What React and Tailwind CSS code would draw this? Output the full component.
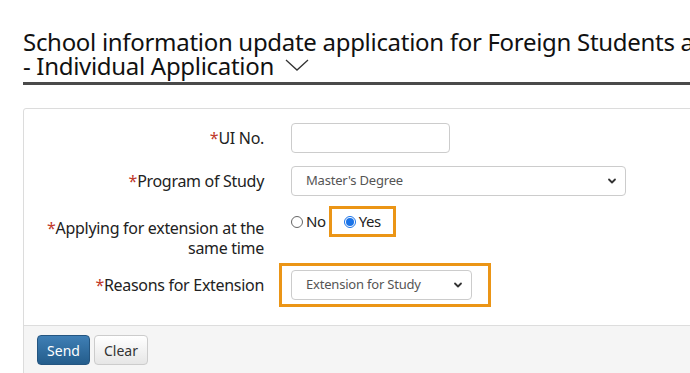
import { useState } from "react";

const Chevron = () => (
  <svg width="10" height="10" viewBox="0 0 10 10" className="shrink-0">
    <path d="M2 3.5 L5 6.5 L8 3.5" fill="none" stroke="#333" strokeWidth="1.8" strokeLinecap="round" strokeLinejoin="round" />
  </svg>
);

const Label = ({ children }) => (
  <div className="w-[240px] shrink-0 text-right text-[16px] leading-[27px] tracking-[-0.3px] text-[#222]">
    <span className="text-[#c0392b]">*</span>
    {children}
  </div>
);

const App = () => {
  const [extend, setExtend] = useState("yes");

  return (
    <div className="min-h-screen bg-white pl-[23px] pt-[30px] font-['Noto_Sans','Open_Sans',sans-serif] overflow-hidden">
      {/* Title */}
      <div className="border-b-[3px] border-[#4a4a4a] pb-[4px]">
        <h1 className="whitespace-nowrap text-[24px] leading-[24px] tracking-[-0.3px] text-[#111]">
          School information update application for Foreign Students and Overseas Chinese Students
          <br />
          - Individual Application
          <svg width="26" height="16" viewBox="0 0 26 16" className="ml-[10px] inline-block align-[2px]">
            <path d="M2 3 L13 13 L24 3" fill="none" stroke="#333" strokeWidth="1.3" />
          </svg>
        </h1>
      </div>

      {/* Form card */}
      <div className="mt-[23px] w-[700px] border border-[#dcdcdc] rounded-tl-[3px]">
        <div className="pt-[14px] pb-[18px] flex flex-col">
          {/* UI No */}
          <div className="flex items-center gap-[27px]">
            <Label>UI No.</Label>
            <input
              type="text"
              className="h-[30px] w-[159px] rounded-[4px] border border-[#ccc] px-2 outline-none"
            />
          </div>

          {/* Program of Study */}
          <div className="mt-[13px] flex items-center gap-[27px]">
            <Label>Program of Study</Label>
            <div className="flex h-[30px] w-[335px] items-center justify-between rounded-[4px] border border-[#ccc] pl-[14px] pr-[8px] text-[13px] tracking-[-0.2px] text-[#555]">
              <span>Master's Degree</span>
              <Chevron />
            </div>
          </div>

          {/* Extension radio */}
          <div className="mt-[10px] flex items-start gap-[27px]">
            <div className="w-[240px] shrink-0 pt-[12px] text-right text-[16px] leading-[20px] tracking-[-0.3px] text-[#222]">
              <span className="text-[#c0392b]">*</span>Applying for extension at the
              <br />
              same time
            </div>
            <div className="flex items-center text-[15px] tracking-[-0.4px] text-[#222]">
              <label className="flex items-center gap-[3px] cursor-pointer" onClick={() => setExtend("no")}>
                <span className={`h-[12px] w-[12px] rounded-full border ${extend === "no" ? "border-[#1a73e8] border-[4px]" : "border-[#666]"}`} />
                No
              </label>
              <div className="ml-[3px] flex h-[31px] w-[67px] items-center border-[3px] border-[#eb9516] pl-[12px]">
                <label className="flex items-center gap-[3px] cursor-pointer" onClick={() => setExtend("yes")}>
                  <span className={`flex h-[12px] w-[12px] items-center justify-center rounded-full border ${extend === "yes" ? "border-[#1a73e8]" : "border-[#666]"}`}>
                    {extend === "yes" && <span className="h-[8px] w-[8px] rounded-full bg-[#1a73e8]" />}
                  </span>
                  Yes
                </label>
              </div>
            </div>
          </div>

          {/* Reasons for Extension */}
          <div className="mt-[5px] flex items-center gap-[15px]">
            <Label>Reasons for Extension</Label>
            <div className="flex h-[44px] w-[212px] items-center border-[3px] border-[#eb9516] pl-[9px]">
              <div className="flex h-[30px] w-[181px] items-center justify-between rounded-[4px] border border-[#ccc] pl-[14px] pr-[8px] text-[13px] tracking-[-0.2px] text-[#555]">
                <span>Extension for Study</span>
                <Chevron />
              </div>
            </div>
          </div>
        </div>

        {/* Footer */}
        <div className="flex gap-[4px] border-t border-[#ddd] bg-[#f5f5f5] px-[13px] pt-[9px] pb-[10px]">
          <button className="h-[30px] w-[53px] rounded-[4px] border border-[#245580] bg-gradient-to-b from-[#3f7fb5] to-[#245d8c] text-[14px] text-white">
            Send
          </button>
          <button className="h-[30px] w-[54px] rounded-[4px] border border-[#ccc] bg-gradient-to-b from-white to-[#e6e6e6] text-[14px] text-[#333]">
            Clear
          </button>
        </div>
      </div>
    </div>
  );
};

export default App;
